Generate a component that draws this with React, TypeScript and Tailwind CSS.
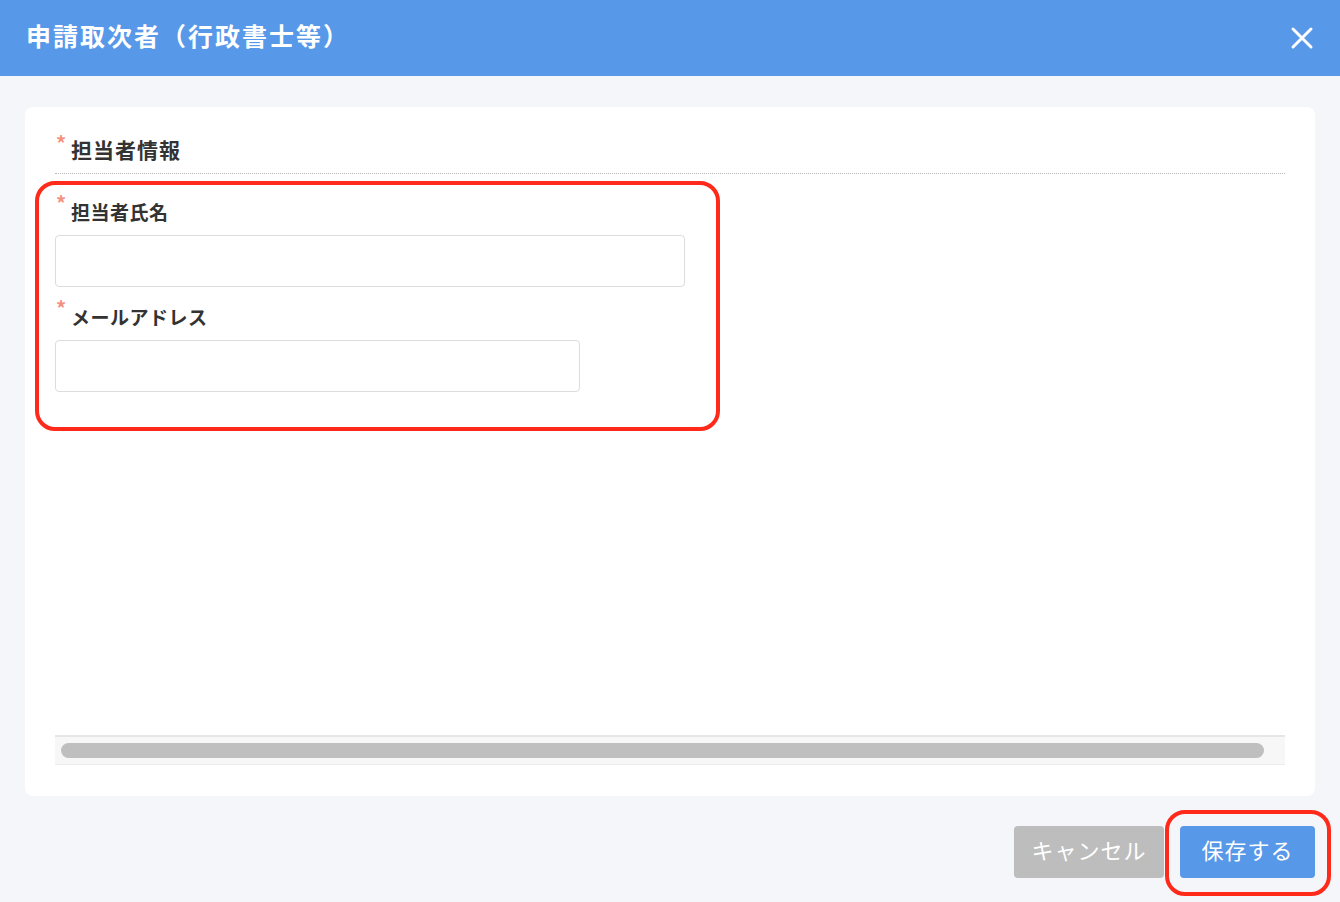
import React from "react";

const font = { fontFamily: '"Noto Sans CJK JP", "Noto Sans", sans-serif' };

const Required = () => (
  <span className="w-[16px] self-start pl-[1px] text-[20px] font-bold leading-[16px] text-[#f5907f]">*</span>
);

const Field = ({ label, width }: { label: string; width: string }) => (
  <div className="flex flex-col">
    <div className="flex h-[30px] items-end">
      <Required />
      <span className="text-[19px] font-bold leading-[27px] tracking-[0.5px] text-[#333]">{label}</span>
    </div>
    <input
      type="text"
      className={`mt-[10px] h-[52px] ${width} rounded-[4px] border border-[#dcdcdc] bg-white px-3 outline-none`}
    />
  </div>
);

export default function App() {
  return (
    <div className="relative flex min-h-[902px] w-[1340px] flex-col bg-[#f5f6fa]" style={font}>
      <header className="flex h-[76px] items-center justify-between bg-[#5898e8] pb-[4px] pl-[26px] pr-[26px]">
        <h1 className="text-[25px] font-bold tracking-[2px] text-white">申請取次者（行政書士等）</h1>
        <button className="mt-[4px] text-white">
          <svg width="24" height="24" viewBox="0 0 24 24" fill="none" stroke="currentColor" strokeWidth="3" strokeLinecap="round">
            <path d="M3 3 21 21M21 3 3 21" />
          </svg>
        </button>
      </header>

      <main className="flex flex-col px-[25px] pt-[31px]">
        <section className="flex h-[689px] flex-col rounded-[8px] bg-white px-[30px] pb-[31px] pt-[28px]">
          <div className="flex flex-1 flex-col">
            <div className="flex items-end border-b border-dotted border-[#b8b8b8] pb-[10px]">
              <Required />
              <h2 className="text-[21px] font-bold leading-[28px] tracking-[1px] text-[#333]">担当者情報</h2>
            </div>
            <div className="mt-[21px] flex flex-col gap-[13px]">
              <Field label="担当者氏名" width="w-[630px]" />
              <Field label="メールアドレス" width="w-[525px]" />
            </div>
          </div>
          <div className="border-t-2 border-[#e6e6e6] bg-[#f7f7f7] px-[6px] py-[6px] border-b border-b-[#ececec]">
            <div className="h-[15px] rounded-full bg-[#bfbfbf] mr-[15px]" />
          </div>
        </section>

        <div className="mt-[30px] flex justify-end gap-[16px]">
          <button className="h-[52px] w-[150px] rounded-[4px] bg-[#bdbdbd] pb-[5px] text-[22px] tracking-[1px] text-white">
            キャンセル
          </button>
          <button className="h-[52px] w-[135px] rounded-[4px] bg-[#5898e8] pb-[5px] text-[22px] tracking-[1px] text-white">
            保存する
          </button>
        </div>
      </main>

      {/* annotation outlines */}
      <div className="pointer-events-none absolute left-[35px] top-[181px] h-[250px] w-[685px] rounded-[20px] border-[4px] border-[#ff2a1a]" />
      <div className="pointer-events-none absolute left-[1165px] top-[810px] h-[86px] w-[166px] rounded-[20px] border-[4px] border-[#ff2a1a]" />
    </div>
  );
}
